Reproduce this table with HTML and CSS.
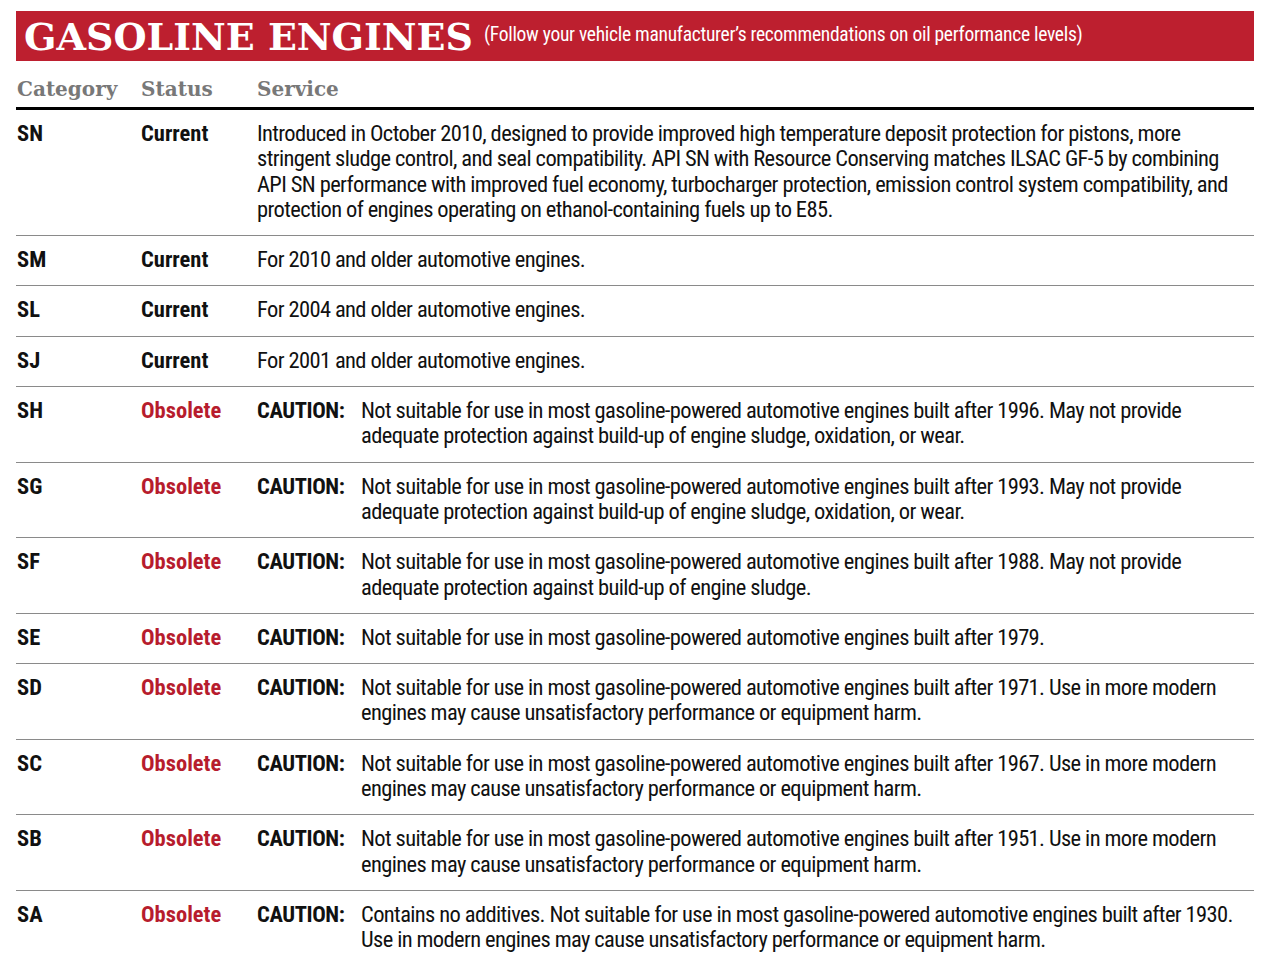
FILE: index.html
```html
<!DOCTYPE html>
<html lang="en">
<head>
<meta charset="utf-8">
<title>Gasoline Engines</title>
<link rel="stylesheet" href="styles.css">
</head>
<body>
<div class="sheet">
  <header class="banner">
    <h1 class="banner__title">GASOLINE ENGINES</h1>
    <span class="banner__note">(Follow your vehicle manufacturer’s recommendations on oil performance levels)</span>
  </header>

  <div class="table">
    <div class="row row--head">
      <div class="cell">Category</div>
      <div class="cell">Status</div>
      <div class="cell">Service</div>
    </div>

    <div class="row">
      <div class="cell cat">SN</div>
      <div class="cell status">Current</div>
      <div class="cell service">Introduced in October 2010, designed to provide improved high temperature deposit protection for pistons, more<br>stringent sludge control, and seal compatibility. API SN with Resource Conserving matches ILSAC GF-5 by combining<br>API SN performance with improved fuel economy, turbocharger protection, emission control system compatibility, and<br>protection of engines operating on ethanol-containing fuels up to E85.</div>
    </div>

    <div class="row">
      <div class="cell cat">SM</div>
      <div class="cell status">Current</div>
      <div class="cell service">For 2010 and older automotive engines.</div>
    </div>

    <div class="row">
      <div class="cell cat">SL</div>
      <div class="cell status">Current</div>
      <div class="cell service">For 2004 and older automotive engines.</div>
    </div>

    <div class="row">
      <div class="cell cat">SJ</div>
      <div class="cell status">Current</div>
      <div class="cell service">For 2001 and older automotive engines.</div>
    </div>

    <div class="row">
      <div class="cell cat">SH</div>
      <div class="cell status status--old">Obsolete</div>
      <div class="cell service service--caution"><span class="caution">CAUTION:</span><span class="caution__text">Not suitable for use in most gasoline-powered automotive engines built after 1996. May not provide<br>adequate protection against build-up of engine sludge, oxidation, or wear.</span></div>
    </div>

    <div class="row">
      <div class="cell cat">SG</div>
      <div class="cell status status--old">Obsolete</div>
      <div class="cell service service--caution"><span class="caution">CAUTION:</span><span class="caution__text">Not suitable for use in most gasoline-powered automotive engines built after 1993. May not provide<br>adequate protection against build-up of engine sludge, oxidation, or wear.</span></div>
    </div>

    <div class="row">
      <div class="cell cat">SF</div>
      <div class="cell status status--old">Obsolete</div>
      <div class="cell service service--caution"><span class="caution">CAUTION:</span><span class="caution__text">Not suitable for use in most gasoline-powered automotive engines built after 1988. May not provide<br>adequate protection against build-up of engine sludge.</span></div>
    </div>

    <div class="row">
      <div class="cell cat">SE</div>
      <div class="cell status status--old">Obsolete</div>
      <div class="cell service service--caution"><span class="caution">CAUTION:</span><span class="caution__text">Not suitable for use in most gasoline-powered automotive engines built after 1979.</span></div>
    </div>

    <div class="row">
      <div class="cell cat">SD</div>
      <div class="cell status status--old">Obsolete</div>
      <div class="cell service service--caution"><span class="caution">CAUTION:</span><span class="caution__text">Not suitable for use in most gasoline-powered automotive engines built after 1971. Use in more modern<br>engines may cause unsatisfactory performance or equipment harm.</span></div>
    </div>

    <div class="row">
      <div class="cell cat">SC</div>
      <div class="cell status status--old">Obsolete</div>
      <div class="cell service service--caution"><span class="caution">CAUTION:</span><span class="caution__text">Not suitable for use in most gasoline-powered automotive engines built after 1967. Use in more modern<br>engines may cause unsatisfactory performance or equipment harm.</span></div>
    </div>

    <div class="row">
      <div class="cell cat">SB</div>
      <div class="cell status status--old">Obsolete</div>
      <div class="cell service service--caution"><span class="caution">CAUTION:</span><span class="caution__text">Not suitable for use in most gasoline-powered automotive engines built after 1951. Use in more modern<br>engines may cause unsatisfactory performance or equipment harm.</span></div>
    </div>

    <div class="row row--last">
      <div class="cell cat">SA</div>
      <div class="cell status status--old">Obsolete</div>
      <div class="cell service service--caution"><span class="caution">CAUTION:</span><span class="caution__text">Contains no additives. Not suitable for use in most gasoline-powered automotive engines built after 1930.<br>Use in modern engines may cause unsatisfactory performance or equipment harm.</span></div>
    </div>
  </div>
</div>
</body>
</html>
```

FILE: styles.css
```css
* { box-sizing: border-box; }

html, body {
  margin: 0;
  padding: 0;
  background: #ffffff;
}

body {
  font-family: "Roboto", "Liberation Sans", sans-serif;
  font-stretch: 75%;
  color: #111111;
  overflow: hidden;
}

.sheet {
  padding: 11px 18px 0 16px;
}

.banner {
  height: 50px;
  background: #bd1f2f;
  color: #ffffff;
  display: flex;
  align-items: center;
  padding-left: 8px;
  gap: 11px;
}

.banner__title {
  margin: 0;
  font-family: "DejaVu Serif", "Liberation Serif", serif;
  font-stretch: normal;
  font-weight: 700;
  font-size: 38px;
  line-height: 1;
  padding-top: 2px;
}

.banner__note {
  font-size: 19.5px;
  letter-spacing: -0.28px;
  line-height: 1;
  padding-bottom: 2px;
}

.row {
  display: grid;
  grid-template-columns: 124px 116px 1fr;
  border-bottom: 1px solid #8a8a8a;
  padding: 11px 0 13px 1px;
  font-size: 22.5px;
  letter-spacing: -0.62px;
  line-height: 25.3px;
}

.row--head {
  padding: 16px 0 6px 1px;
  border-bottom: 3px solid #000000;
  font-family: "DejaVu Serif", "Liberation Serif", serif;
  font-stretch: normal;
  font-weight: 700;
  font-size: 20px;
  letter-spacing: 0;
  line-height: 24px;
  color: #787878;
}

.row--last {
  border-bottom: none;
}

.cat,
.status,
.caution {
  font-weight: 700;
}

.cat,
.status {
  letter-spacing: 0;
}

.caution {
  letter-spacing: -0.4px;
}

.status--old {
  color: #b71c2d;
}

.service {
  white-space: nowrap;
}

.service--caution {
  display: flex;
}

.caution {
  flex: 0 0 104px;
}
```
